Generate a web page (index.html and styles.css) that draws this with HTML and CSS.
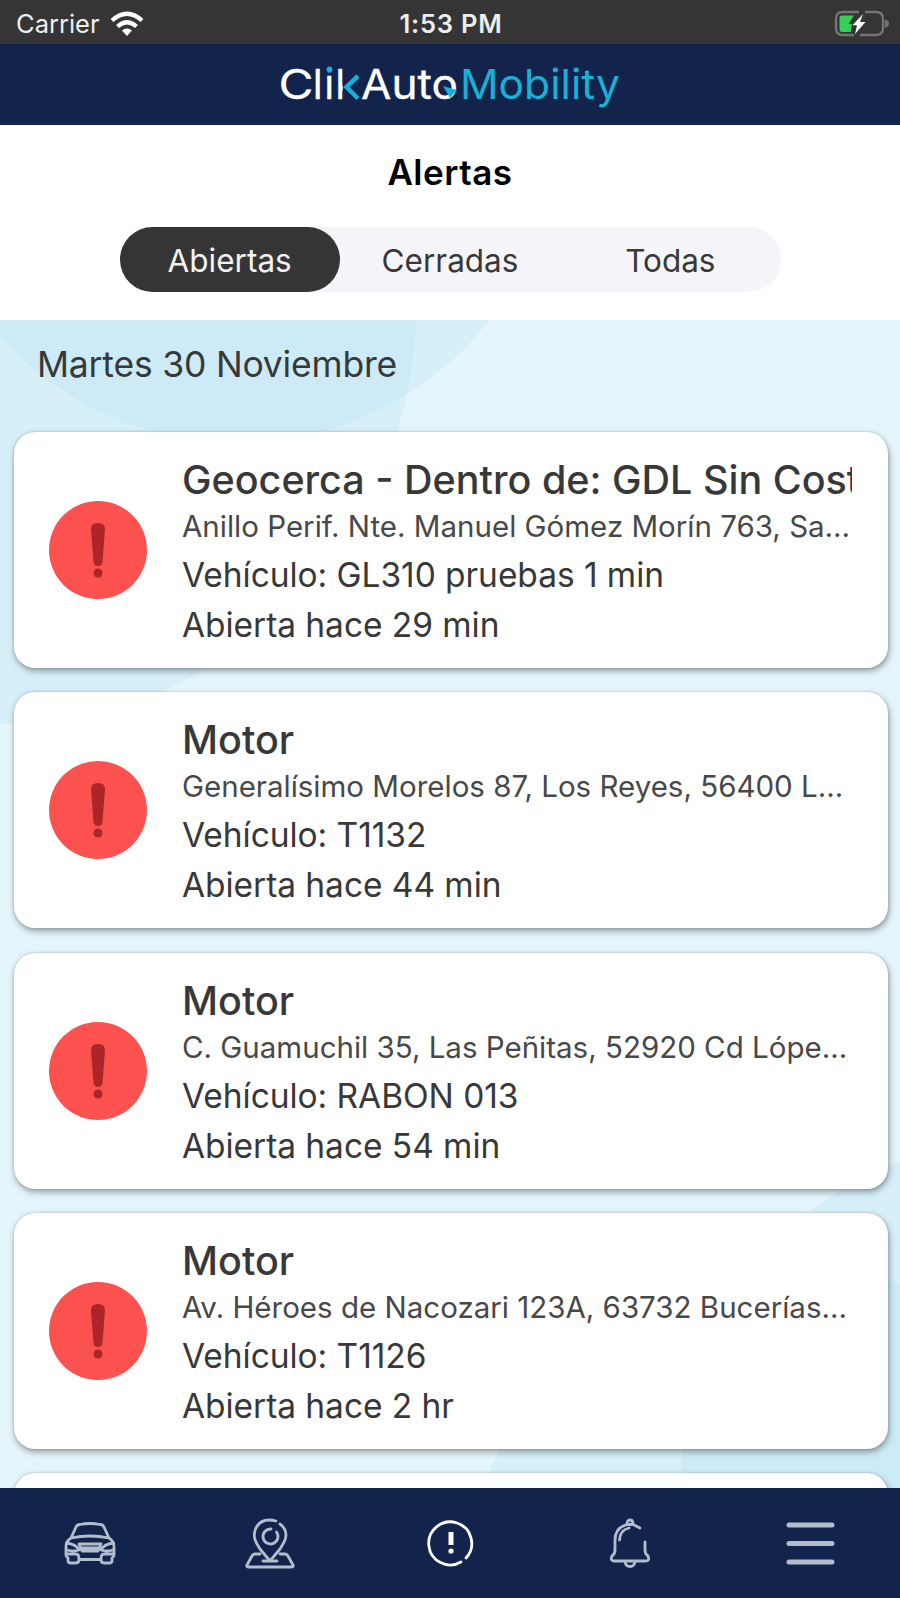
FILE: index.html
```html
<!DOCTYPE html>
<html lang="es">
<head>
    <meta charset="UTF-8">
    <meta name="viewport" content="width=device-width, initial-scale=1.0">
    <title>Alertas</title>
    <link rel="stylesheet" href="styles.css">
</head>
<body>
    <div class="status-bar">
        <div class="carrier">
            <span>Carrier</span>
            <svg width="34" height="26" viewBox="0 0 34 26">
                <path d="M2 9.5Q17 -4 32 9.5" fill="none" stroke="#fff" stroke-width="4.2"/>
                <path d="M7.5 15.5Q17 7 26.5 15.5" fill="none" stroke="#fff" stroke-width="4.2"/>
                <path d="M12 19.5Q17 15.5 22 19.5L17 25Z" fill="#fff"/>
            </svg>
        </div>
        <div class="time">1:53 PM</div>
        <svg class="battery" width="56" height="28" viewBox="0 0 56 28">
            <path d="M25 2H9Q2 2 2 9V18Q2 25 9 25H20M31 2H42Q49 2 49 9V18Q49 25 42 25H26" fill="none" stroke="#747474" stroke-width="2.4"/>
            <path d="M51 9.5Q55 11 55 13.5T51 18Z" fill="#747474"/>
            <path d="M8 5.500H20L14.500 14H18L17 22H8Q5.500 22 5.500 19V8Q5.500 5.500 8 5.500Z" fill="#33d158"/>
            <path d="M29 4L18.500 15.200H23L21 24L31.500 12H26Z" fill="#fff"/>
        </svg>
    </div>

    <header class="header">
        <svg class="logo" width="344" height="60" viewBox="0 0 344 60">
            <text class="logo-white" x="0.5" y="43" textLength="35" lengthAdjust="spacingAndGlyphs">C</text>
            <text class="logo-white" x="34.8 46.3 57.3" y="43">lik</text>
            <rect x="64.800" y="8" width="18" height="38" fill="#12244b"/>
            <path d="M80 20L68.500 31L80 42.500" fill="none" stroke="#19b0d8" stroke-width="4.500"/>
            <rect x="47" y="8" width="9" height="8.500" fill="#12244b"/>
            <circle cx="51.500" cy="13.500" r="2.900" fill="#19b0d8"/>
            <text class="logo-white" x="83" y="43" textLength="97" lengthAdjust="spacingAndGlyphs">Auto</text>
            <path d="M165 30L179 34L172 42Z" fill="#19b0d8"/>
            <text class="logo-cyan" x="182" y="43" textLength="160" lengthAdjust="spacingAndGlyphs">Mobility</text>
        </svg>
    </header>

    <section class="filters">
        <h1>Alertas</h1>
        <div class="tabs">
            <div class="tab active">Abiertas</div>
            <div class="tab">Cerradas</div>
            <div class="tab">Todas</div>
        </div>
    </section>

    <main class="alerts">
        <svg class="backdrop" width="900" height="1168" viewBox="0 320 900 1168">
            <circle cx="0" cy="308" r="416"/>
            <circle cx="238" cy="123" r="319.500"/>
            <circle cx="1015" cy="1475" r="334"/>
            <circle cx="800" cy="1610" r="340"/>
        </svg>
        <h2 class="date">Martes 30 Noviembre</h2>
        <div class="list">
            <article class="card">
                <svg class="badge" width="98" height="98" viewBox="0 0 98 98">
                    <circle cx="49" cy="49" r="49" fill="#fb5250"/>
                    <path d="M42 28Q42 22 49 22T56 28L53.500 61Q53 65 49 65T44.500 61Z" fill="#ac2529"/>
                    <circle cx="49" cy="72" r="4.500" fill="#ac2529"/>
                </svg>
                <div class="info">
                    <h3>Geocerca - Dentro de: GDL Sin Costo</h3>
                    <p class="address">Anillo Perif. Nte. Manuel Gómez Morín 763, Sa...</p>
                    <p class="detail">Vehículo: GL310 pruebas 1 min</p>
                    <p class="detail">Abierta hace 29 min</p>
                </div>
            </article>
            <article class="card">
                <svg class="badge" width="98" height="98" viewBox="0 0 98 98">
                    <circle cx="49" cy="49" r="49" fill="#fb5250"/>
                    <path d="M42 28Q42 22 49 22T56 28L53.500 61Q53 65 49 65T44.500 61Z" fill="#ac2529"/>
                    <circle cx="49" cy="72" r="4.500" fill="#ac2529"/>
                </svg>
                <div class="info">
                    <h3>Motor</h3>
                    <p class="address">Generalísimo Morelos 87, Los Reyes, 56400 L...</p>
                    <p class="detail">Vehículo: T1132</p>
                    <p class="detail">Abierta hace 44 min</p>
                </div>
            </article>
            <article class="card">
                <svg class="badge" width="98" height="98" viewBox="0 0 98 98">
                    <circle cx="49" cy="49" r="49" fill="#fb5250"/>
                    <path d="M42 28Q42 22 49 22T56 28L53.500 61Q53 65 49 65T44.500 61Z" fill="#ac2529"/>
                    <circle cx="49" cy="72" r="4.500" fill="#ac2529"/>
                </svg>
                <div class="info">
                    <h3>Motor</h3>
                    <p class="address">C. Guamuchil 35, Las Peñitas, 52920 Cd Lópe...</p>
                    <p class="detail">Vehículo: RABON 013</p>
                    <p class="detail">Abierta hace 54 min</p>
                </div>
            </article>
            <article class="card">
                <svg class="badge" width="98" height="98" viewBox="0 0 98 98">
                    <circle cx="49" cy="49" r="49" fill="#fb5250"/>
                    <path d="M42 28Q42 22 49 22T56 28L53.500 61Q53 65 49 65T44.500 61Z" fill="#ac2529"/>
                    <circle cx="49" cy="72" r="4.500" fill="#ac2529"/>
                </svg>
                <div class="info">
                    <h3>Motor</h3>
                    <p class="address">Av. Héroes de Nacozari 123A, 63732 Bucerías...</p>
                    <p class="detail">Vehículo: T1126</p>
                    <p class="detail">Abierta hace 2 hr</p>
                </div>
            </article>
            <article class="card"></article>
        </div>
    </main>

    <nav class="tab-bar">
        <a class="nav-item">
            <svg width="54" height="54" viewBox="0 0 54 54">
                <path d="M8 21L13 10Q14 7.500 17 7.500Q27 5.500 37 7.500Q40 7.500 41 10L46 21M8 21Q27 17 46 21Q51 24 51 30V38Q51 40 49 41V44Q49 46 46 46H41Q38 46 38 42.500H16Q16 46 13 46H8Q5 46 5 44V41Q3 40 3 38V30Q3 24 8 21Z"/>
                <path d="M3.500 26Q13 27 16 33Q10 35 4 33M50.500 26Q41 27 38 33Q44 35 50 33M16 27H38L35 34H19ZM19 31H35M4 37H13Q16 37 16 42M50 37H41Q38 37 38 42"/>
            </svg>
        </a>
        <a class="nav-item">
            <svg width="54" height="54" viewBox="0 0 54 54">
                <path d="M33 4Q18 0 12.500 12C9 21 14 27 17 32L27 44L37 32C40 27 45 21 42 13Q40 9 37 7"/>
                <path d="M28 12A7.500 7.500 0 1 0 33.500 15"/>
                <path d="M17 37H12Q10 37 9 39L4 48Q3 50 6 50H48Q51 50 50 48L45 39Q44 37 42 37H37M20 44H34"/>
            </svg>
        </a>
        <a class="nav-item selected">
            <svg width="54" height="54" viewBox="0 0 54 54">
                <path d="M43 41A21.500 21.500 0 1 0 38 45"/>
                <path d="M28 15V28" stroke-width="5" stroke-linecap="butt"/>
                <circle cx="28" cy="34" r="2.600" fill="#fff" stroke="none"/>
            </svg>
        </a>
        <a class="nav-item">
            <svg width="54" height="54" viewBox="0 0 54 54">
                <path d="M37 11L30 7.500H24Q12 11 12 23V33Q12 37 9 39Q7 44 11 44H43Q47 44 45 39Q42 37 42 33V25"/>
                <path d="M24 7Q24 3 27 3T30 7M22 45Q23 49.500 27 49.500T32 45M16.500 23Q17 13 26 11"/>
            </svg>
        </a>
        <a class="nav-item">
            <svg width="54" height="54" viewBox="0 0 54 54">
                <path d="M6 8H49M6 26.500H49M6 45H49" stroke-width="5"/>
            </svg>
        </a>
    </nav>
</body>
</html>
```
FILE: styles.css
```css
* {
    box-sizing: border-box;
}
body {
    display: flex;
    flex-direction: column;
    width: 900px;
    height: 1598px;
    margin: 0;
    overflow: hidden;
    background-color: #fff;
    color: #383838;
    font-family: Inter, "Liberation Sans", sans-serif;
}
h1, h2, h3, p {
    margin: 0;
    white-space: nowrap;
}
.status-bar {
    display: grid;
    grid-template-columns: 1fr auto 1fr;
    align-items: center;
    flex: none;
    height: 44px;
    padding: 3px 10px 0 16px;
    background-color: #353535;
    color: #eee;
    font-size: 25.5px;
}
.carrier {
    display: flex;
    align-items: center;
    gap: 10px;
}
.time {
    margin-left: -4px;
    font-weight: 600;
    letter-spacing: 0.8px;
}
.battery {
    justify-self: end;
}
.header {
    display: flex;
    justify-content: center;
    flex: none;
    height: 81px;
    padding-top: 12px;
    background-color: #12244b;
}
.logo {
    font-size: 41px;
}
.logo-white {
    fill: #fff;
    stroke: #fff;
    stroke-width: 0.3;
}
.logo-cyan {
    fill: #19b0d8;
}
.filters {
    display: flex;
    flex-direction: column;
    align-items: center;
    flex: none;
    height: 195px;
    padding-top: 25px;
}
.filters h1 {
    height: 44px;
    margin-bottom: 33px;
    color: #000;
    font-size: 35px;
    font-weight: 600;
    letter-spacing: 0.5px;
    line-height: 44px;
}
.tabs {
    display: flex;
    width: 661px;
    height: 65px;
    border-radius: 33px;
    background-color: #f5f5f9;
}
.tab {
    flex: 1;
    border-radius: 33px;
    font-size: 31.5px;
    line-height: 68px;
    text-align: center;
}
.tab.active {
    background-color: #353535;
    color: #f2f2f2;
}
.alerts {
    position: relative;
    flex: 1;
    min-height: 0;
    overflow: hidden;
    background-color: #e5f5fc;
}
.backdrop {
    position: absolute;
    top: 0;
    left: 0;
    fill: rgba(155, 217, 238, 0.18);
}
.date {
    position: relative;
    height: 112px;
    padding: 23px 0 0 37px;
    font-size: 35.5px;
    font-weight: 400;
    letter-spacing: -0.2px;
    line-height: 44px;
}
.list {
    position: relative;
    display: flex;
    flex-direction: column;
    gap: 24.3px;
    padding: 0 12px 0 14px;
}
.card {
    display: flex;
    flex: none;
    gap: 35px;
    height: 236px;
    padding: 0 36px 0 35px;
    border-radius: 21px;
    background-color: #fff;
    box-shadow: 1px 3px 6px rgba(60, 70, 70, 0.5), 0 0 2px rgba(60, 60, 60, 0.3);
}
.badge {
    flex: none;
    margin-top: 69px;
}
.info {
    flex: 1;
    min-width: 0;
    padding-top: 24px;
    overflow: hidden;
}
.info h3 {
    height: 47px;
    overflow: hidden;
    font-size: 39.5px;
    font-weight: 450;
    line-height: 48px;
}
.address {
    height: 46px;
    color: #484848;
    font-size: 29.5px;
    line-height: 46px;
}
.detail {
    height: 50px;
    font-size: 33.5px;
    letter-spacing: -0.05px;
    line-height: 53px;
}
.tab-bar {
    display: flex;
    flex: none;
    height: 110px;
    padding-top: 29px;
    background-color: #12244b;
}
.nav-item {
    flex: 1;
    text-align: center;
}
.nav-item svg {
    fill: none;
    stroke: #b3bdcd;
    stroke-width: 2.8;
    stroke-linecap: round;
    stroke-linejoin: round;
}
.nav-item.selected svg {
    stroke: #fff;
}
```
